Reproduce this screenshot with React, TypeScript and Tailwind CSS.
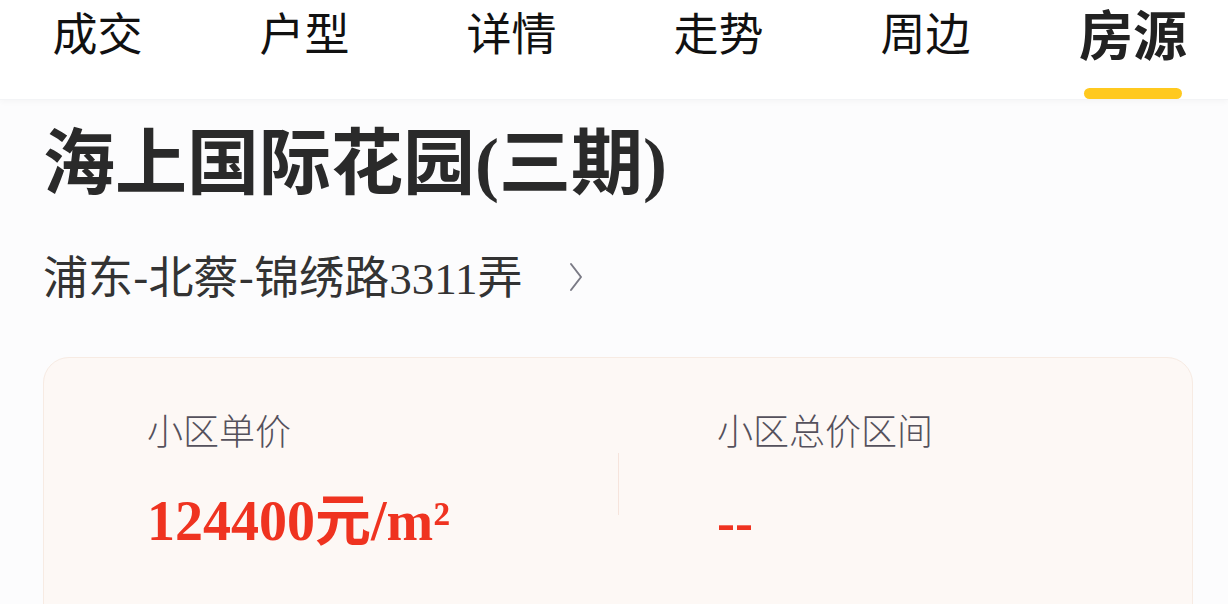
const tabs = ["成交", "户型", "详情", "走势", "周边", "房源"];

const cjk = "font-['Noto_Sans_CJK_SC',sans-serif]";
const serif = "font-['Liberation_Serif','Noto_Sans_CJK_SC',serif]";

export default function App() {
  return (
    <div className={`w-[1228px] h-[604px] overflow-hidden bg-[#fcfcfd] ${cjk}`}>
      {/* Tabs */}
      <header className="relative h-[100px] bg-white shadow-[0_2px_6px_rgba(0,0,0,0.03)] border-b border-[#f3f4f6]">
        <nav className="flex -ml-[6px]">
          {tabs.map((t, i) => {
            const active = i === tabs.length - 1;
            return active ? (
              <div key={t} className="w-[190px] h-[100px] pl-[18px] flex justify-center">
                <div className="relative h-[100px] flex justify-center">
                  <span className="mt-[1px] text-[54px] leading-[1.2] font-bold text-[#222] whitespace-nowrap">{t}</span>
                  <span className="absolute bottom-[1px] left-1/2 -translate-x-1/2 w-[98px] h-[11px] rounded-full bg-[#ffc91f]" />
                </div>
              </div>
            ) : (
              <div key={t} className="w-[207px] h-[100px] flex justify-center">
                <span className="mt-[9px] text-[45px] leading-none text-[#111]">{t}</span>
              </div>
            );
          })}
        </nav>
      </header>

      {/* Title */}
      <div className="px-[43px]">
        <h1 className="mt-[21px] text-[72px] leading-none font-bold text-[#2a2a2a]">
          海上国际花园<span className={serif}>(</span>三期<span className={serif}>)</span>
        </h1>
        <div className="mt-[52px] flex items-center text-[45px] leading-none text-[#333]">
          <span>
            浦东-北蔡-锦绣路<span className={serif}>3311</span>弄
          </span>
          <svg className="ml-[46px] w-[14px] h-[30px]" viewBox="0 0 14 30" fill="none">
            <path d="M2 2 L12 15 L2 28" stroke="#7a7a85" strokeWidth="2" strokeLinecap="round" strokeLinejoin="round" />
          </svg>
        </div>
      </div>

      {/* Price card */}
      <div className="ml-[43px] mr-[35px] mt-[55px] h-[280px] rounded-[26px] bg-[#fdf8f5] border border-[#f7ebe3] flex">
        <div className="w-[574px] pl-[103px] pt-[53px]">
          <div className="text-[36px] leading-none font-light text-[#55515c]">小区单价</div>
          <div className={`mt-[41px] text-[56px] leading-none font-bold text-[#ef3320] ${serif}`}>
            124400<span className={cjk}>元</span>/m²
          </div>
        </div>
        <div className="mt-[95px] w-px h-[62px] bg-[#f6e4dc]" />
        <div className="flex-1 pl-[98px] pt-[53px]">
          <div className="text-[36px] leading-none font-light text-[#55515c]">小区总价区间</div>
          <div className={`mt-[49px] text-[54px] leading-none font-bold text-[#ef3320] ${serif}`}>--</div>
        </div>
      </div>
    </div>
  );
}
